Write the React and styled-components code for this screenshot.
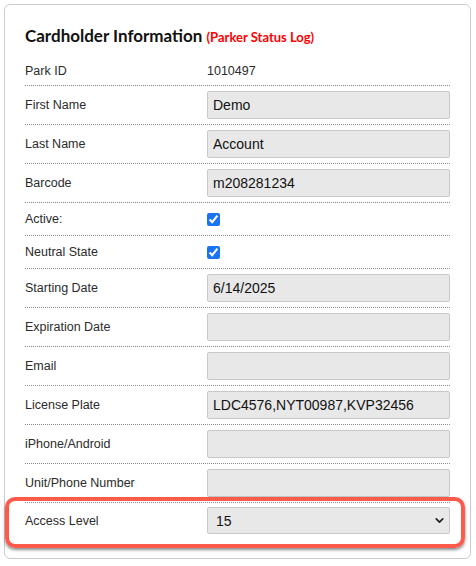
import styled, { createGlobalStyle } from "styled-components"
import { ChevronDown } from "lucide-react"

const fields = [
    { label: "First Name", value: "Demo" },
    { label: "Last Name", value: "Account" },
    { label: "Barcode", value: "m208281234" },
    { label: "Active:", checked: true },
    { label: "Neutral State", checked: true },
    { label: "Starting Date", value: "6/14/2025" },
    { label: "Expiration Date", value: "" },
    { label: "Email", value: "" },
    { label: "License Plate", value: "LDC4576,NYT00987,KVP32456" },
    { label: "iPhone/Android", value: "" },
    { label: "Unit/Phone Number", value: "" },
]

export default function App() {
    return (
        <>
            <GlobalStyle />
            <Card>
                <Title>
                    Cardholder Information <StatusLink>(Parker Status Log)</StatusLink>
                </Title>
                <TextRow>
                    <Label>Park ID</Label>
                    <PlainValue>1010497</PlainValue>
                </TextRow>
                {fields.map((f) =>
                    f.checked !== undefined ? (
                        <CheckRow key={f.label}>
                            <Label>{f.label}</Label>
                            <Check type="checkbox" defaultChecked={f.checked} />
                        </CheckRow>
                    ) : (
                        <Row key={f.label}>
                            <Label>{f.label}</Label>
                            <Input type="text" defaultValue={f.value} />
                        </Row>
                    )
                )}
                <LastRow>
                    <Highlight />
                    <Label>Access Level</Label>
                    <SelectWrap>
                        <Select defaultValue="15">
                            <option value="15">15</option>
                        </Select>
                        <Chevron size={13} strokeWidth={3.2} />
                    </SelectWrap>
                </LastRow>
            </Card>
        </>
    )
}

const GlobalStyle = createGlobalStyle`
    body{
        margin: 0;
        background-color: #FFFFFF;
        font-family: "Liberation Sans", Arial, sans-serif;
    }
`
const Card = styled.div`
    margin: 4px 6px 0 4px;
    width: 467px;
    box-sizing: border-box;
    padding: 20px 20px 19px 20px;
    border: 1px solid #CCCCCC;
    border-radius: 6px;
    background-color: #FFFFFF;
`
const Title = styled.h2`
    margin: 0 0 5px 0;
    font-family: "Lato", sans-serif;
    font-weight: 700;
    font-size: 17px;
    line-height: 22px;
    color: #111111;
`
const StatusLink = styled.span`
    font-size: 13px;
    color: #FF0000;
`
const BaseRow = styled.div`
    display: grid;
    grid-template-columns: 182px 1fr;
    align-items: center;
    line-height: 14px;
    border-bottom: 1px dotted #8A8A8A;
`
const TextRow = styled(BaseRow)`
    padding: 11px 0 7px 0;
`
const Row = styled(BaseRow)`
    padding: 5px 0;
`
const CheckRow = styled(BaseRow)`
    padding: 9px 0 9px 0;
`
const LastRow = styled(BaseRow)`
    position: relative;
    padding: 4px 0 5px 0;
    border-bottom: none;
`
const Label = styled.span`
    font-size: 12.5px;
    color: #2B2B2B;
`
const PlainValue = styled.span`
    font-size: 12.5px;
    color: #2B2B2B;
`
const Input = styled.input`
    box-sizing: border-box;
    width: 100%;
    height: 28px;
    padding: 0 5px;
    border: 1px solid #C8C8C8;
    border-radius: 2px;
    background-color: #E8E8E8;
    font-family: "Liberation Sans", Arial, sans-serif;
    font-size: 14px;
    color: #111111;
    outline: none;
`
const Check = styled.input`
    margin: 0;
    width: 13px;
    height: 13px;
    accent-color: #1A73F0;
`
const SelectWrap = styled.div`
    position: relative;
`
const Select = styled.select`
    box-sizing: border-box;
    width: 100%;
    height: 27px;
    padding: 0 8px;
    appearance: none;
    border: 1px solid #C8C8C8;
    border-radius: 2px;
    background-color: #E8E8E8;
    font-family: "Liberation Sans", Arial, sans-serif;
    font-size: 14px;
    color: #111111;
    outline: none;
`
const Chevron = styled(ChevronDown)`
    position: absolute;
    right: 4px;
    top: 7px;
    color: #222222;
    pointer-events: none;
`
const Highlight = styled.div`
    position: absolute;
    left: -20px;
    right: -15px;
    top: -6px;
    bottom: -9px;
    border: 4px solid #FF5A4C;
    border-radius: 10px;
    box-shadow: 0 2px 3px rgba(0, 0, 0, 0.45);
    pointer-events: none;
`
